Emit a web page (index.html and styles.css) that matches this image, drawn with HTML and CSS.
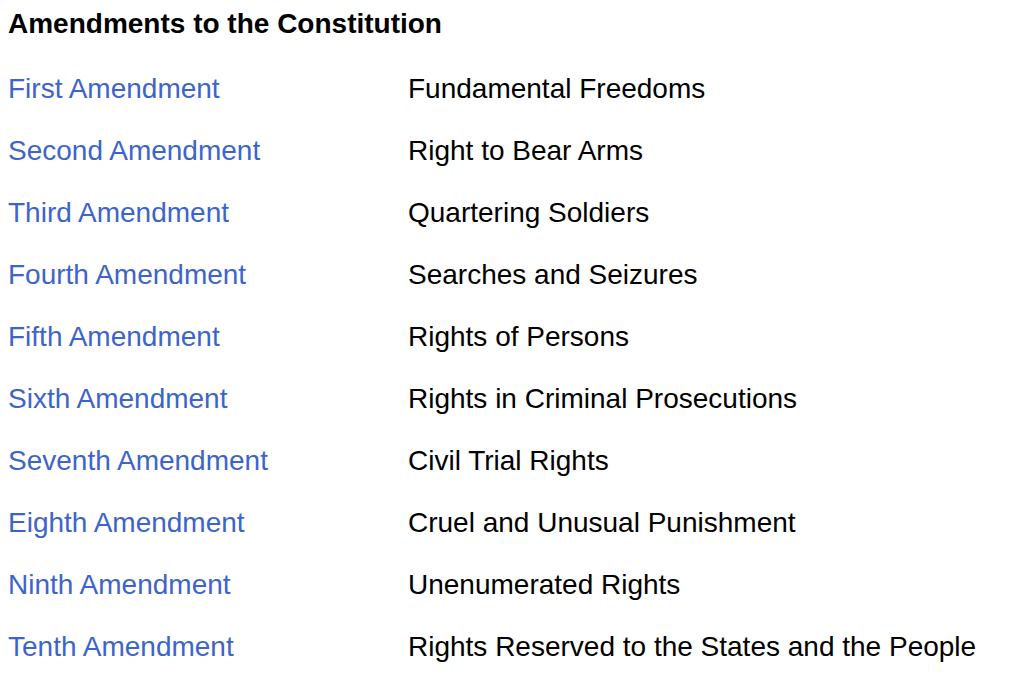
FILE: index.html
```html
<!DOCTYPE html>
<html lang="en">
<head>
<meta charset="utf-8">
<title>Amendments to the Constitution</title>
<link rel="stylesheet" href="styles.css">
</head>
<body>
<h1 class="title">Amendments to the Constitution</h1>
<div class="list">
  <a class="amend" href="#">First Amendment</a><span class="desc">Fundamental Freedoms</span>
  <a class="amend" href="#">Second Amendment</a><span class="desc">Right to Bear Arms</span>
  <a class="amend" href="#">Third Amendment</a><span class="desc">Quartering Soldiers</span>
  <a class="amend" href="#">Fourth Amendment</a><span class="desc">Searches and Seizures</span>
  <a class="amend" href="#">Fifth Amendment</a><span class="desc">Rights of Persons</span>
  <a class="amend" href="#">Sixth Amendment</a><span class="desc">Rights in Criminal Prosecutions</span>
  <a class="amend" href="#">Seventh Amendment</a><span class="desc">Civil Trial Rights</span>
  <a class="amend" href="#">Eighth Amendment</a><span class="desc">Cruel and Unusual Punishment</span>
  <a class="amend" href="#">Ninth Amendment</a><span class="desc">Unenumerated Rights</span>
  <a class="amend" href="#">Tenth Amendment</a><span class="desc">Rights Reserved to the States and the People</span>
</div>
</body>
</html>
```
FILE: styles.css
```css
html, body {
  background: #ffffff;
}
body {
  margin: 8px;
  font-family: "Liberation Sans", Arial, Helvetica, sans-serif;
  font-size: 28px;
  line-height: 32px;
  color: #000000;
}
.title {
  margin: 0;
  font-size: 28px;
  line-height: 32px;
  font-weight: bold;
}
.list {
  margin-top: 33px;
  display: grid;
  grid-template-columns: 400px 1fr;
  row-gap: 30px;
}
.amend {
  color: #3d64cb;
  text-decoration: none;
}
.desc {
  color: #000000;
}
```
